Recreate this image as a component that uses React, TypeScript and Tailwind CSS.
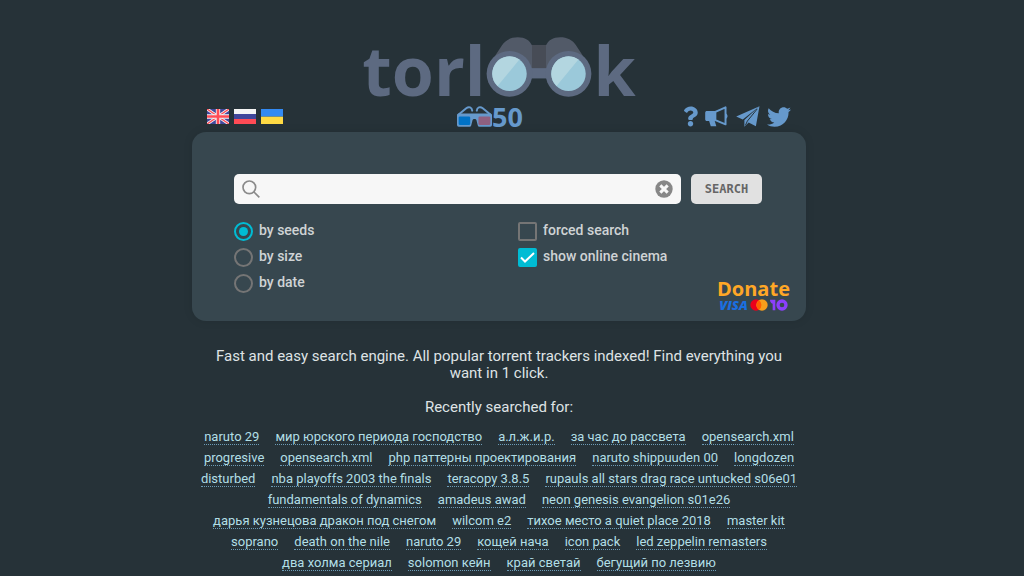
import React, { useState } from 'react';
import { clsx } from 'clsx';
import { FaQuestion, FaTwitter } from 'react-icons/fa';

const recentRows: string[][] = [
  ['naruto 29', 'мир юрского периода господство', 'а.л.ж.и.р.', 'за час до рассвета', 'opensearch.xml'],
  ['progresive', 'opensearch.xml', 'php паттерны проектирования', 'naruto shippuuden 00', 'longdozen'],
  ['disturbed', 'nba playoffs 2003 the finals', 'teracopy 3.8.5', 'rupauls all stars drag race untucked s06e01'],
  ['fundamentals of dynamics', 'amadeus awad', 'neon genesis evangelion s01e26'],
  ['дарья кузнецова дракон под снегом', 'wilcom e2', 'тихое место a quiet place 2018', 'master kit'],
  ['soprano', 'death on the nile', 'naruto 29', 'кощей нача', 'icon pack', 'led zeppelin remasters'],
  ['два холма сериал', 'solomon кейн', 'край светай', 'бегущий по лезвию'],
];

const sortOptions = ['seeds', 'size', 'date'] as const;
type SortBy = (typeof sortOptions)[number];

function Binoculars() {
  return (
    <svg viewBox="405 36 318 181" className="w-[106px] h-[60px] shrink-0" aria-hidden="true">
      <path fill="#474c56" d="M538 60h52v75h-52z" />
      <path fill="#525a68" d="M414 120l38-58c11-17 27-25 48-25 22 0 36 9 43 25v80z" />
      <path fill="#525a68" d="M714 120l-38-58c-11-17-27-25-48-25-22 0-36 9-43 25v80z" />
      <path fill="#5d6a81" d="M530 130h68v31h-68z" />
      {[475, 653].map((cx) => (
        <g key={cx}>
          <circle cx={cx} cy="147" r="69" fill="#5d6a81" />
          <circle cx={cx} cy="147" r="52" fill="#9bc9da" />
          <path fill="#b3d6e0" d={`M${cx + 30} 104a52 52 0 0 0-66 80z`} />
        </g>
      ))}
    </svg>
  );
}

function Logo() {
  return (
    <a
      href="#"
      aria-label="torlook"
      className="flex items-end justify-center h-[61px] text-[#5d6a81] font-['Open_Sans',sans-serif] font-bold text-[68px] leading-[54px]"
    >
      <span>torl</span>
      <Binoculars />
      <span className="ml-[2px]">k</span>
    </a>
  );
}

function FlagUk() {
  return (
    <svg viewBox="0 0 66 45" className="w-[22px] h-[15px]" aria-hidden="true">
      <path fill="#41479b" d="M0 0h66v45H0z" />
      <path stroke="#f5f5f5" strokeWidth="9" d="M0 0l66 45M66 0L0 45" />
      <path stroke="#ff4b55" strokeWidth="4" d="M0 0l66 45M66 0L0 45" />
      <path stroke="#f5f5f5" strokeWidth="13" d="M33 0v45M0 22.500h66" />
      <path stroke="#ff4b55" strokeWidth="8" d="M33 0v45M0 22.500h66" />
    </svg>
  );
}

function FlagRu() {
  return (
    <svg viewBox="0 0 66 45" className="w-[22px] h-[15px]" aria-hidden="true">
      <path fill="#f5f5f5" d="M0 0h66v15H0z" />
      <path fill="#41479b" d="M0 15h66v15H0z" />
      <path fill="#ff4b55" d="M0 30h66v15H0z" />
    </svg>
  );
}

function FlagUa() {
  return (
    <svg viewBox="0 0 66 45" className="w-[22px] h-[15px]" aria-hidden="true">
      <path fill="#338af3" d="M0 0h66v23H0z" />
      <path fill="#ffda44" d="M0 23h66v22H0z" />
    </svg>
  );
}

function Glasses3d() {
  return (
    <svg viewBox="0 0 106 62" className="w-[35px] h-[21px]" aria-hidden="true">
      <path
        fill="none"
        stroke="#6699cc"
        strokeWidth="6"
        strokeLinecap="round"
        d="M5 25L28 6c8-6 17-3 18 7M101 25L78 6c-8-6-17-3-18 7"
      />
      <path
        fill="#6699cc"
        d="M5 22h96a5 5 0 0 1 5 5v30a5 5 0 0 1-5 5H68a5 5 0 0 1-5-4l-4-16c-1-5-11-5-12 0l-4 16a5 5 0 0 1-5 4H5a5 5 0 0 1-5-5V27a5 5 0 0 1 5-5z"
      />
      <rect x="5" y="31" width="35" height="26" rx="4" fill="#0072c6" />
      <rect x="65" y="31" width="36" height="26" rx="4" fill="#8f6080" />
    </svg>
  );
}

function Megaphone() {
  return (
    <svg viewBox="0 0 72 64" className="w-6 h-[21px]" fill="currentColor" aria-hidden="true">
      <path d="M6 15h26v31h-3l5 16H17l-5-16H6c-4 0-6-3-6-6V21c0-4 2-6 6-6z" />
      <path fill="none" stroke="currentColor" strokeWidth="6" strokeLinejoin="round" d="M31 18L62 4v52L31 43z" />
      <path d="M62 23c8 1 8 15 0 16z" />
    </svg>
  );
}

function PaperPlane() {
  return (
    <svg viewBox="0 0 72 64" className="w-6 h-[21px]" fill="currentColor" aria-hidden="true">
      <path d="M71 1L0 32l20 9zM71 1L25 43v20l13-13 22 12z" />
      <path fill="none" stroke="#263238" strokeWidth="3" d="M64 9L34 46l-6 13" />
    </svg>
  );
}

function Toolbar() {
  return (
    <div className="flex items-center justify-between h-[35px] px-[15px] pt-1 text-[#6699cc]">
      <nav className="flex gap-[5px] w-[90px]" aria-label="Language">
        <a href="#en" aria-label="English"><FlagUk /></a>
        <a href="#ru" aria-label="Русский"><FlagRu /></a>
        <a href="#ua" aria-label="Українська"><FlagUa /></a>
      </nav>
      <a
        href="#online"
        className="flex items-center font-['Open_Sans',sans-serif] font-bold text-[27px] leading-[22px]"
      >
        <Glasses3d />
        50
      </a>
      <nav className="flex items-center gap-[7px]" aria-label="Links">
        <a href="#help" aria-label="Help"><FaQuestion className="w-[15px] h-[21px]" /></a>
        <a href="#news" aria-label="News"><Megaphone /></a>
        <a href="#telegram" aria-label="Telegram"><PaperPlane /></a>
        <a href="#twitter" aria-label="Twitter"><FaTwitter className="w-6 h-6" /></a>
      </nav>
    </div>
  );
}

interface CheckOptionProps {
  label: string;
  checked: boolean;
  onChange: (checked: boolean) => void;
}

function CheckOption({ label, checked, onChange }: CheckOptionProps) {
  return (
    <label className="flex h-[19px] gap-[6px] leading-4">
      <span className="grid">
        <input
          type="checkbox"
          checked={checked}
          onChange={(e) => onChange(e.target.checked)}
          className="[grid-area:1/1] appearance-none size-[19px] rounded-xs border-2 border-[#757575] checked:bg-[#00bcd4] checked:border-[#00bcd4]"
        />
        <svg
          viewBox="0 0 19 19"
          className={clsx('[grid-area:1/1] size-[19px] pointer-events-none', !checked && 'hidden')}
          aria-hidden="true"
        >
          <path fill="none" stroke="#fff" strokeWidth="2" d="M3 9.500l4 4L16 5" />
        </svg>
      </span>
      {label}
    </label>
  );
}

function Donate() {
  return (
    <a href="#donate" aria-label="Donate" className="self-end flex flex-col items-center gap-[2px] w-[75px]">
      <span className="font-['Open_Sans',sans-serif] font-bold text-[20px] leading-4 text-[#ffa726]">
        Donate
      </span>
      <span className="flex items-center gap-[2px] h-3">
        <span className="font-['Open_Sans',sans-serif] italic font-extrabold text-[13px] leading-3 text-[#1a6fe0]">
          VISA
        </span>
        <svg viewBox="0 0 54 36" className="w-[18px] h-3" aria-hidden="true">
          <circle cx="18" cy="18" r="17" fill="#eb001b" />
          <circle cx="36" cy="18" r="17" fill="#f79e1b" />
          <path fill="#ff5f00" d="M27 4a17 17 0 0 1 0 28 17 17 0 0 1 0-28z" />
        </svg>
        <svg viewBox="0 0 54 36" className="w-[18px] h-3" aria-hidden="true">
          <path fill="#8b3ffd" d="M0 2h16v32H8V14C3 12 0 8 0 2z" />
          <circle cx="36" cy="18" r="12" fill="none" stroke="#8b3ffd" strokeWidth="10" />
        </svg>
      </span>
    </a>
  );
}

function SearchCard() {
  const [query, setQuery] = useState('');
  const [sortBy, setSortBy] = useState<SortBy>('seeds');
  const [forced, setForced] = useState(false);
  const [cinema, setCinema] = useState(true);

  return (
    <form
      onSubmit={(e) => e.preventDefault()}
      className="rounded-[14px] bg-[#37474f] pt-[42px] pb-[10px] pl-[42px] pr-[15px] shadow-[0_0_10px_rgba(0,0,0,0.1)]"
    >
      <div className="flex gap-[10px] pr-[29px]">
        <div className="flex flex-1 items-center h-[30px] rounded-[5px] bg-[#f7f7f7] px-2">
          <svg viewBox="0 0 54 54" className="size-[18px]" fill="none" stroke="#8a8a8a" strokeWidth="5" aria-hidden="true">
            <circle cx="22" cy="22" r="19" />
            <path d="M36 36l16 16" />
          </svg>
          <input
            type="text"
            aria-label="Search"
            value={query}
            onChange={(e) => setQuery(e.target.value)}
            className="flex-1 min-w-0 h-full px-2 bg-transparent outline-none text-gray-800"
          />
          <button type="button" aria-label="Clear" onClick={() => setQuery('')}>
            <svg viewBox="0 0 54 54" className="size-[18px]" aria-hidden="true">
              <circle cx="27" cy="27" r="26" fill="#878787" />
              <path stroke="#f7f7f7" strokeWidth="9" d="M16 16l22 22M38 16L16 38" />
            </svg>
          </button>
        </div>
        <button
          type="submit"
          className="w-[71px] h-[30px] rounded-[5px] bg-[#e1e1e1] font-['DejaVu_Sans_Mono',monospace] font-bold text-xs text-[#666]"
        >
          SEARCH
        </button>
      </div>

      <div className="grid grid-cols-[51%_1fr_auto] mt-[18px] min-h-[89px] text-[14px] font-medium text-[#cfd3d5]">
        <fieldset className="flex flex-col gap-[7px]">
          {sortOptions.map((option) => (
            <label key={option} className="flex h-[19px] gap-[6px] leading-4">
              <input
                type="radio"
                name="sort"
                checked={sortBy === option}
                onChange={() => setSortBy(option)}
                className="grid place-items-center appearance-none size-[19px] rounded-full border-2 border-[#757575] checked:border-[#00bcd4] checked:before:size-[9px] checked:before:rounded-full checked:before:bg-[#00bcd4]"
              />
              by {option}
            </label>
          ))}
        </fieldset>
        <div className="flex flex-col gap-[7px]">
          <CheckOption label="forced search" checked={forced} onChange={setForced} />
          <CheckOption label="show online cinema" checked={cinema} onChange={setCinema} />
        </div>
        <Donate />
      </div>
    </form>
  );
}

export default function App() {
  return (
    <div className="min-h-screen overflow-hidden bg-[#263238] pt-9 pr-[26px] font-['Roboto','Noto_Sans',sans-serif]">
      <main className="w-full max-w-[614px] mx-auto">
        <Logo />
        <Toolbar />
        <SearchCard />

        <div className="mt-[27px] px-3 text-center text-[15px] leading-[17px] text-[#dfe3e5]">
          <p>
            Fast and easy search engine. All popular torrent trackers indexed! Find everything you want in 1 click.
          </p>
          <p className="mt-[17px]">Recently searched for:</p>
        </div>

        <div className="mt-[13px] flex flex-col gap-[5px] text-[13px] leading-[15px] text-[#b2dfe6]">
          {recentRows.map((row, i) => (
            <div key={i} className="flex justify-center gap-4 whitespace-nowrap">
              {row.map((term) => (
                <a key={term} href="#search" className="border-b border-dotted border-[#6c9bb5]">
                  {term}
                </a>
              ))}
            </div>
          ))}
        </div>
      </main>
    </div>
  );
}
